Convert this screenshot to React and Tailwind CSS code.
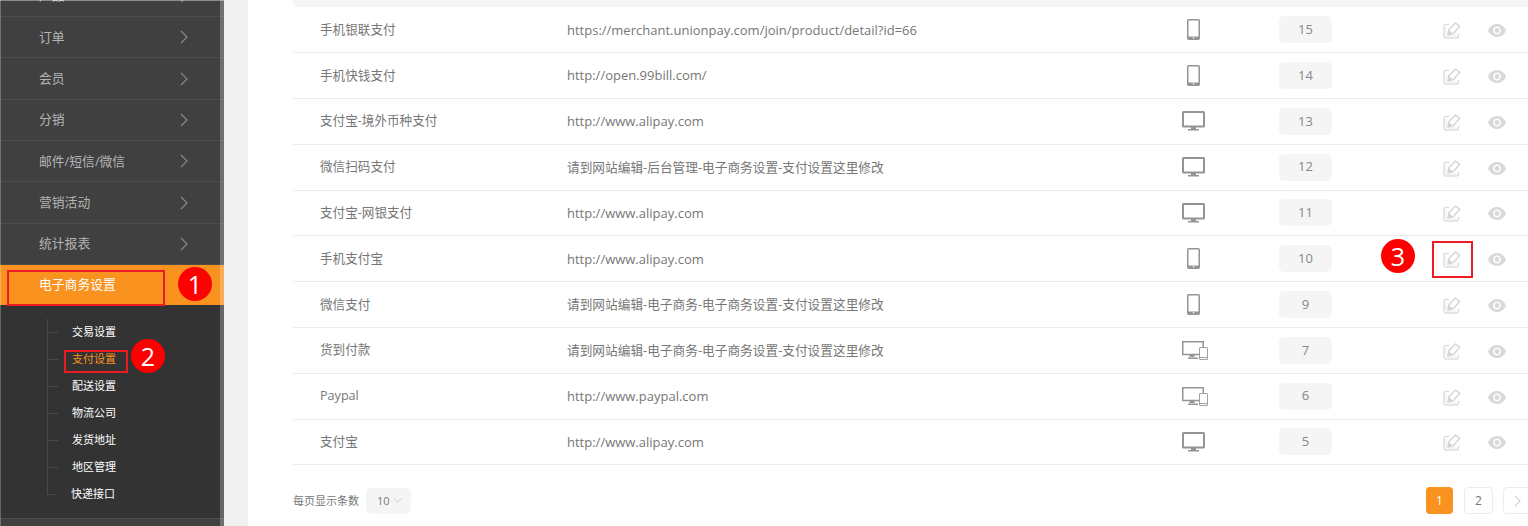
const FONT = { fontFamily: '"Open Sans", "Noto Sans CJK SC", sans-serif' };

const sideItems = ["产品", "订单", "会员", "分销", "邮件/短信/微信", "营销活动", "统计报表"];
const subItems = ["交易设置", "支付设置", "配送设置", "物流公司", "发货地址", "地区管理", "快递接口"];

const rows = [
  { name: "手机银联支付", url: "https://merchant.unionpay.com/join/product/detail?id=66", device: "phone", sort: 15 },
  { name: "手机快钱支付", url: "http://open.99bill.com/", device: "phone", sort: 14 },
  { name: "支付宝-境外币种支付", url: "http://www.alipay.com", device: "pc", sort: 13 },
  { name: "微信扫码支付", url: "请到网站编辑-后台管理-电子商务设置-支付设置这里修改", device: "pc", sort: 12 },
  { name: "支付宝-网银支付", url: "http://www.alipay.com", device: "pc", sort: 11 },
  { name: "手机支付宝", url: "http://www.alipay.com", device: "phone", sort: 10 },
  { name: "微信支付", url: "请到网站编辑-电子商务-电子商务设置-支付设置这里修改", device: "phone", sort: 9 },
  { name: "货到付款", url: "请到网站编辑-电子商务-电子商务设置-支付设置这里修改", device: "both", sort: 7 },
  { name: "Paypal", url: "http://www.paypal.com", device: "both", sort: 6 },
  { name: "支付宝", url: "http://www.alipay.com", device: "pc", sort: 5 },
];

function PhoneIcon() {
  return (
    <svg width="13" height="21" viewBox="0 0 13 21" fill="none">
      <rect x="0.75" y="0.75" width="11.5" height="19.5" rx="1" stroke="#949494" strokeWidth="1.5" />
      <rect x="1" y="17.5" width="11" height="2.5" fill="#949494" />
      <circle cx="6.5" cy="18.7" r="0.8" fill="#fff" />
    </svg>
  );
}

function PcIcon() {
  return (
    <svg width="23" height="20" viewBox="0 0 23 20" fill="none" className="ml-px">
      <rect x="1" y="1" width="21" height="14.5" rx="0.5" stroke="#949494" strokeWidth="2" />
      <rect x="9" y="16" width="5" height="2" fill="#949494" />
      <rect x="6" y="18" width="11" height="1.5" fill="#949494" />
    </svg>
  );
}

function BothIcon() {
  return (
    <svg width="26" height="19" viewBox="0 0 26 19" fill="none" className="ml-[4px]">
      <path d="M17 13.500H.75V.75H21.250V6" stroke="#949494" strokeWidth="1.500" />
      <rect x="7.500" y="14" width="5" height="2" fill="#949494" />
      <rect x="6" y="16.500" width="10" height="1.500" fill="#949494" />
      <rect x="17.500" y="6.500" width="8" height="12" rx="0.500" stroke="#a0a0a0" />
      <path d="M17.500 16.500H25.500" stroke="#a0a0a0" />
    </svg>
  );
}

function EditIcon() {
  return (
    <svg width="18" height="17" viewBox="0 0 18 17" fill="none">
      <path d="M6 2.500H3Q1 2.500 1 4.500V13.500Q1 16 3.500 16H13Q15.500 16 15.500 13.500V12" stroke="#dedede" strokeWidth="1.500" />
      <path d="M3 5V12.500Q3 14 4.500 14H13" stroke="#ececec" />
      <path d="M12.500 1L16.700 4.300L10.500 11.500L5 13L5.800 7.800Z" stroke="#d6d6d6" strokeWidth="1.500" fill="#fff" strokeLinejoin="round" />
      <path d="M5.500 8L10 11.500L5 13Z" fill="#d6d6d6" />
    </svg>
  );
}

function EyeIcon() {
  return (
    <svg width="18" height="13" viewBox="0 0 18 13">
      <path fillRule="evenodd" fill="#d9d9d9" d="M9 0C5 0 1.700 2.600 0 6.500C1.700 10.400 5 13 9 13S16.300 10.400 18 6.500C16.300 2.600 13 0 9 0ZM9 2.500C11.200 2.500 13 4.300 13 6.500S11.200 10.500 9 10.500S5 8.700 5 6.500S6.800 2.500 9 2.500Z" />
      <circle cx="9" cy="6.500" r="2.400" fill="#d9d9d9" />
    </svg>
  );
}

function Chevron({ color = "#8a8a8a", w = 8, h = 14 }) {
  return (
    <svg width={w} height={h} viewBox="0 0 8 14" fill="none">
      <path d="M1 1L7 7L1 13" stroke={color} strokeWidth="1.200" />
    </svg>
  );
}

function Badge({ n, className }) {
  return (
    <div className={`absolute w-[34px] h-[34px] rounded-full bg-[#fe0000] text-white text-[25px] leading-[34px] text-center ${className}`}>
      {n}
    </div>
  );
}

function Sidebar() {
  return (
    <aside className="relative w-[224px] h-full shrink-0 bg-[#404040] overflow-hidden">
      <div className="-mt-[24.300px]">
        {sideItems.map((item) => (
          <div key={item} className="h-[41.330px] border-b border-[#4d4d4d] pl-[39px] pr-[36px] flex items-center justify-between text-[12.800px] text-[#b4b4b4]">
            <span>{item}</span>
            <Chevron />
          </div>
        ))}
      </div>
      <div className="h-[40px] bg-[#f9921e] pl-[39px] flex items-center text-[12.800px] text-white">
        电子商务设置
      </div>
      <div className="h-[214px] bg-[#333333] border-b border-[#4d4d4d] pt-[14px] pl-[47px]">
        <ul>
          {subItems.map((item, i) => (
            <li key={item} className={i === 6 ? "h-[27px] flex items-center" : "h-[27px] flex items-center border-l border-[#4a4a4a]"}>
              <span className={i === 6 ? "w-[10px] h-[14px] self-start border-l border-b border-[#4a4a4a]" : "w-[10px] h-[14px] self-start border-b border-[#4a4a4a]"} />
              <span className={i === 1 ? "ml-[14px] text-[11px] text-[#f9921e]" : "ml-[14px] text-[11px] text-white"}>{item}</span>
            </li>
          ))}
        </ul>
      </div>
      {/* scrollbar strip */}
      <div className="absolute right-0 top-0 bottom-0 w-[4px] bg-white/25" />
      <div className="absolute left-0 top-0 bottom-0 w-px bg-white/25" />
      <div className="absolute left-0 right-0 top-0 h-px bg-white/40" />
    </aside>
  );
}

function Row({ row }) {
  return (
    <div className="h-[45.800px] border-b border-[#ececec] flex items-center text-[#777777]">
      <div className="w-[274px] pl-[27px] pt-px shrink-0 text-[12.600px]">{row.name}</div>
      <div className={row.url.startsWith("http") ? "w-[596px] pt-px shrink-0 text-[13px]" : "w-[596px] shrink-0 text-[12.700px]"}>{row.url}</div>
      <div className="w-[60px] shrink-0 flex justify-center">
        {row.device === "phone" && <PhoneIcon />}
        {row.device === "pc" && <PcIcon />}
        {row.device === "both" && <BothIcon />}
      </div>
      <div className="ml-[56px] w-[53px] h-[27px] rounded-[5px] bg-[#f5f5f5] flex items-center justify-center text-[13px] text-[#888888]">
        {row.sort}
      </div>
      <div className="ml-[100px] mt-[2px] w-[40px] flex justify-center"><EditIcon /></div>
      <div className="ml-[10px] mt-[2px] w-[30px] flex justify-center"><EyeIcon /></div>
    </div>
  );
}

export default function App() {
  return (
    <div className="relative flex w-[1528px] h-[526px] overflow-hidden bg-white" style={FONT}>
      <Sidebar />
      <div className="w-[24px] h-full shrink-0 bg-[#f1f1f1]" />
      <main className="flex-1 pl-[45px] min-w-0">
        <div className="w-[1240px]">
          <div className="h-[7.400px] bg-[#f5f5f5] rounded-bl-[5px]" />
          {rows.map((row) => (
            <Row key={row.sort} row={row} />
          ))}
          <div className="mt-[22px] flex items-center h-[27px]">
            <span className="text-[11px] text-[#777777]">每页显示条数</span>
            <div className="ml-[7px] w-[45px] h-[26px] rounded-[5px] bg-[#f5f5f5] pl-[11px] flex items-center gap-[3px] text-[11px] text-[#777777]">
              10
              <svg width="9" height="5" viewBox="0 0 9 5" fill="none"><path d="M.5.500L4.500 4L8.500.500" stroke="#cccccc" /></svg>
            </div>
            <div className="ml-[1015px] w-[27px] h-[27px] rounded-[4px] bg-[#f9921e] text-white text-[12px] flex items-center justify-center">1</div>
            <div className="ml-[11px] w-[29px] h-[27px] rounded-[4px] border border-[#ececec] text-[#777777] text-[12px] flex items-center justify-center">2</div>
            <div className="ml-[10px] w-[29px] h-[27px] rounded-[4px] border border-[#ececec] flex items-center justify-center">
              <Chevron color="#cccccc" w={7} h={12} />
            </div>
          </div>
        </div>
      </main>

      {/* annotations drawn over the screenshot */}
      <div className="absolute left-[7px] top-[270px] w-[158px] h-[36px] border-2 border-[#ed1c24]" />
      <div className="absolute left-[64px] top-[350px] w-[64px] h-[23px] border-2 border-[#ed1c24]" />
      <div className="absolute left-[1432px] top-[241px] w-[41px] h-[37px] border-2 border-[#ed1c24]" />
      <Badge n="1" className="left-[178px] top-[267px]" />
      <Badge n="2" className="left-[131px] top-[339px]" />
      <Badge n="3" className="left-[1381px] top-[239px]" />
    </div>
  );
}
